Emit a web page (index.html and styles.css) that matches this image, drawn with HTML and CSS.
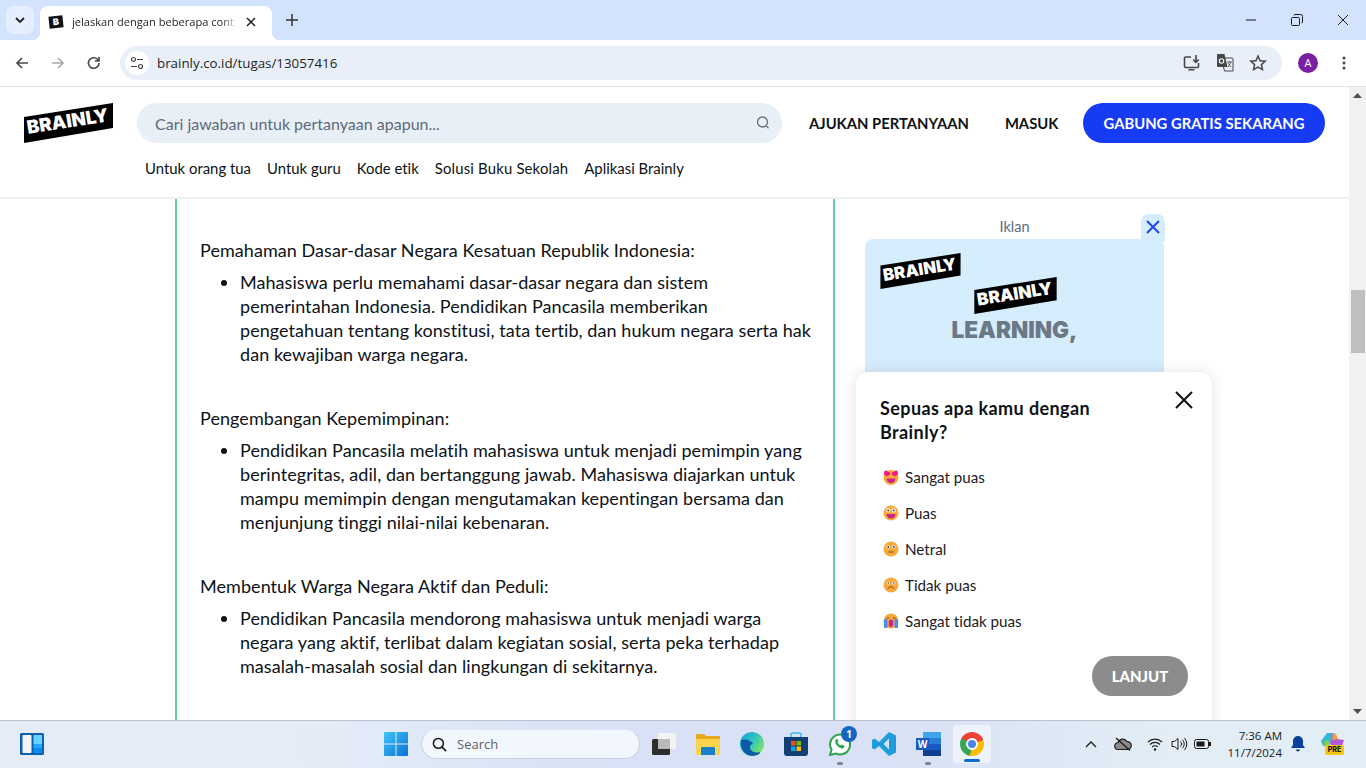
FILE: index.html
```html
<!DOCTYPE html>
<html lang="id">
<head>
<meta charset="utf-8">
<title>Brainly</title>
<link rel="stylesheet" href="styles.css">
</head>
<body>
<div class="tabstrip">
  <button class="tabsearch"><svg width="12" height="12" viewBox="0 0 12 12"><path d="M2 4l4 4 4-4" fill="none" stroke="#1f1f1f" stroke-width="1.8"/></svg></button>
  <div class="tab">
    <span class="favicon">B</span>
    <span class="tabtitle">jelaskan dengan beberapa cont</span>
    <svg class="tabclose" width="10" height="10" viewBox="0 0 10 10"><path d="M1 1l8 8M9 1l-8 8" stroke="#1f1f1f" stroke-width="1.5"/></svg>
  </div>
  <svg class="newtab" width="12" height="12" viewBox="0 0 12 12"><path d="M6 0v12M0 6h12" stroke="#333" stroke-width="1.5"/></svg>
  <div class="winctl">
    <svg width="12" height="12" viewBox="0 0 12 12"><path d="M1 6h10" stroke="#1a1a1a"/></svg>
    <svg width="12" height="12" viewBox="0 0 12 12"><path d="M1.5 3.5h6a1 1 0 0 1 1 1v6a1 1 0 0 1-1 1h-6a1 1 0 0 1-1-1v-6a1 1 0 0 1 1-1zM3 1.5a1 1 0 0 1 1-1h5.500a2 2 0 0 1 2 2V8a1 1 0 0 1-1 1" fill="none" stroke="#1a1a1a"/></svg>
    <svg width="12" height="12" viewBox="0 0 12 12"><path d="M1 1l10 10M11 1L1 11" stroke="#1a1a1a"/></svg>
  </div>
</div>

<div class="toolbar">
  <svg width="16" height="16" viewBox="0 0 16 16"><path d="M14 8H3M8 3L3 8l5 5" fill="none" stroke="#474747" stroke-width="1.600"/></svg>
  <svg width="16" height="16" viewBox="0 0 16 16"><path d="M2 8h11M8 3l5 5-5 5" fill="none" stroke="#a9a9a9" stroke-width="1.600"/></svg>
  <svg width="16" height="16" viewBox="0 0 16 16"><path d="M13 8a5.300 5.300 0 1 1-1.500-3.700L13 6M13 1.800V6H8.800" fill="none" stroke="#474747" stroke-width="1.600"/></svg>
  <div class="omnibox">
    <span class="siteinfo"><svg width="14" height="14" viewBox="0 0 14 14"><circle cx="3.500" cy="3.500" r="2" fill="none" stroke="#444" stroke-width="1.200"/><path d="M7 3.500h6M1 10.500h6" stroke="#444" stroke-width="1.200"/><circle cx="10.500" cy="10.500" r="2" fill="none" stroke="#444" stroke-width="1.200"/></svg></span>
    <span class="url">brainly.co.id/tugas/13057416</span>
    <span class="omni-actions">
      <svg width="18" height="18" viewBox="0 0 18 18"><path d="M8 3H2.500a1 1 0 0 0-1 1v8.500a1 1 0 0 0 1 1h12a1 1 0 0 0 1-1V9M5.500 15.800h6M13 1v7M10.200 5.500L13 8.300l2.800-2.800" fill="none" stroke="#474747" stroke-width="1.600"/></svg>
      <svg width="18" height="18" viewBox="0 0 18 18"><path d="M2 0h7l1.500 4H16a1 1 0 0 1 1 1v12H8l-1-4H2a1 1 0 0 1-1-1V1a1 1 0 0 1 1-1z" fill="#e9eff8"/><path d="M2 0h6.500l3 13H2a1 1 0 0 1-1-1V1a1 1 0 0 1 1-1z" fill="#474747"/><path d="M8.500 4H16a1 1 0 0 1 1 1v12H8.500L7.500 13" fill="none" stroke="#474747"/><circle cx="5.500" cy="7" r="2.200" fill="none" stroke="#fff" stroke-width="1.100"/><path d="M11 8h5M13.500 7v1M12 13l3-5M12 9l3 4" stroke="#474747" stroke-width=".8"/></svg>
      <svg width="18" height="18" viewBox="0 0 18 18"><path d="M9 2l2.100 4.700 5.100.5-3.800 3.400 1.100 5L9 13l-4.500 2.600 1.100-5L1.800 7.200l5.100-.5z" fill="none" stroke="#474747" stroke-width="1.500"/></svg>
    </span>
  </div>
  <span class="avatar">A</span>
  <svg class="kebab" width="4" height="14" viewBox="0 0 4 14"><circle cx="2" cy="2" r="1.500" fill="#474747"/><circle cx="2" cy="7" r="1.500" fill="#474747"/><circle cx="2" cy="12" r="1.500" fill="#474747"/></svg>
</div>

<div class="viewport">
  <div class="page">
    <header class="siteheader">
      <div class="headrow">
        <svg class="logo logo-main" viewBox="0 0 89 40"><polygon points="0,14 89,0 89,25 0,40"/><text x="4" y="31" transform="rotate(-9 4 31)" textLength="82" lengthAdjust="spacingAndGlyphs">BRAINLY</text></svg>
        <div class="search">
          <span>Cari jawaban untuk pertanyaan apapun...</span>
          <svg width="16" height="16" viewBox="0 0 16 16"><circle cx="7.500" cy="7" r="5" fill="none" stroke="#66707c" stroke-width="1.300"/><path d="M11 10.800l2.500 2.500" stroke="#66707c" stroke-width="1.300"/></svg>
        </div>
        <a class="headlink first">AJUKAN PERTANYAAN</a>
        <a class="headlink second">MASUK</a>
        <a class="joinbtn">GABUNG GRATIS SEKARANG</a>
      </div>
      <nav class="subnav">
        <a>Untuk orang tua</a><a>Untuk guru</a><a>Kode etik</a><a class="wide">Solusi Buku Sekolah</a><a>Aplikasi Brainly</a>
      </nav>
    </header>

    <div class="contentrow">
      <main class="answer">
        <p>Pemahaman Dasar-dasar Negara Kesatuan Republik Indonesia:</p>
        <ul><li>Mahasiswa perlu memahami dasar-dasar negara dan sistem pemerintahan Indonesia. Pendidikan Pancasila memberikan pengetahuan tentang konstitusi, tata tertib, dan hukum negara serta hak dan kewajiban warga negara.</li></ul>
        <p>Pengembangan Kepemimpinan:</p>
        <ul><li>Pendidikan Pancasila melatih mahasiswa untuk menjadi pemimpin yang berintegritas, adil, dan bertanggung jawab. Mahasiswa diajarkan untuk mampu memimpin dengan mengutamakan kepentingan bersama dan menjunjung tinggi nilai-nilai kebenaran.</li></ul>
        <p>Membentuk Warga Negara Aktif dan Peduli:</p>
        <ul><li>Pendidikan Pancasila mendorong mahasiswa untuk menjadi warga negara yang aktif, terlibat dalam kegiatan sosial, serta peka terhadap masalah-masalah sosial dan lingkungan di sekitarnya.</li></ul>
      </main>
      <aside class="adcol">
        <div class="adlabel">Iklan</div>
        <div class="adbox">
          <svg class="logo adlogo1" viewBox="0 0 89 40"><polygon points="0,14 89,0 89,25 0,40"/><text x="4" y="31" transform="rotate(-9 4 31)" textLength="82" lengthAdjust="spacingAndGlyphs">BRAINLY</text></svg>
          <svg class="logo adlogo2" viewBox="0 0 89 40"><polygon points="0,14 89,0 89,25 0,40"/><text x="4" y="31" transform="rotate(-9 4 31)" textLength="82" lengthAdjust="spacingAndGlyphs">BRAINLY</text></svg>
          <div class="adhead">LEARNING,</div>
          <button class="adclose"><svg width="14" height="14" viewBox="0 0 14 14"><path d="M1 1l12 12M13 1L1 13" stroke="#1f45ee" stroke-width="2"/></svg></button>
        </div>
      </aside>
    </div>

    <section class="survey">
      <svg class="surveyclose" width="18" height="18" viewBox="0 0 18 18"><path d="M1 1l16 16M17 1L1 17" stroke="#0d1216" stroke-width="2"/></svg>
      <h2>Sepuas apa kamu dengan Brainly?</h2>
      <ul class="options">
        <li><svg width="16" height="16" viewBox="0 0 16 16"><circle cx="8" cy="8.500" r="7.500" fill="#f9a83a"/><path d="M3.500 9.500h9a4.500 4.500 0 0 1-9 0z" fill="#c9258c"/><path d="M1 3.500a2 2 0 0 1 3.800-.8A2 2 0 0 1 7 5.500L4 7.500 1.300 5.500zM15 3.500a2 2 0 0 0-3.800-.8A2 2 0 0 0 9 5.500l3 2 2.700-2z" fill="#f2178b"/></svg><span>Sangat puas</span></li>
        <li><svg width="16" height="16" viewBox="0 0 16 16"><circle cx="8" cy="8" r="7.500" fill="#f9a83a"/><circle cx="5.200" cy="5.500" r="1.900" fill="#fff"/><circle cx="10.800" cy="5.500" r="1.900" fill="#fff"/><circle cx="5.200" cy="5.500" r=".9" fill="#333"/><circle cx="10.800" cy="5.500" r=".9" fill="#333"/><path d="M3.500 9h9a4.500 4.500 0 0 1-9 0z" fill="#c9258c"/></svg><span>Puas</span></li>
        <li><svg width="16" height="16" viewBox="0 0 16 16"><circle cx="8" cy="8" r="7.500" fill="#f9a83a"/><circle cx="5.200" cy="6" r="1.800" fill="#fff"/><circle cx="10.800" cy="6" r="1.800" fill="#fff"/><circle cx="5.200" cy="6" r=".9" fill="#333"/><circle cx="10.800" cy="6" r=".9" fill="#333"/><path d="M5.500 11h5" stroke="#7a4a20" stroke-width="1"/></svg><span>Netral</span></li>
        <li><svg width="16" height="16" viewBox="0 0 16 16"><circle cx="8" cy="8" r="7.500" fill="#f9a83a"/><circle cx="5.200" cy="6" r="1.600" fill="#fff"/><circle cx="10.800" cy="6" r="1.600" fill="#fff"/><circle cx="5.200" cy="6" r=".8" fill="#333"/><circle cx="10.800" cy="6" r=".8" fill="#333"/><path d="M5 11.800a3.200 3.200 0 0 1 6 0" fill="none" stroke="#7a4a20" stroke-width="1"/></svg><span>Tidak puas</span></li>
        <li><svg width="16" height="16" viewBox="0 0 16 16"><circle cx="8" cy="8" r="7.500" fill="#f9a83a"/><rect x="1" y="6" width="3.500" height="9" rx="1" fill="#4f8be8"/><rect x="11.500" y="6" width="3.500" height="9" rx="1" fill="#4f8be8"/><rect x="5.800" y="6.500" width="4.400" height="7.500" rx="2.200" fill="#c9258c"/><path d="M3.500 5h2.500M10 5h2.500" stroke="#7a4a20"/></svg><span>Sangat tidak puas</span></li>
      </ul>
      <div class="surveyfoot"><button class="nextbtn">LANJUT</button></div>
    </section>
  </div>

  <div class="scrollbar">
    <svg width="9" height="5" viewBox="0 0 9 5"><path d="M4.500 0L9 5H0z" fill="#505050"/></svg>
    <div class="thumbtrack"><div class="thumb"></div></div>
    <svg width="9" height="5" viewBox="0 0 9 5"><path d="M0 0h9L4.500 5z" fill="#505050"/></svg>
  </div>
</div>

<footer class="taskbar">
  <svg class="widgets" width="25" height="22" viewBox="0 0 25 22"><rect width="24" height="22" rx="1.500" fill="#0f5fb0"/><rect x="2.500" y="2" width="9" height="18" rx="1" fill="#f4f4f4"/><rect x="13.500" y="2" width="8.500" height="9" fill="#67d2ff"/><rect x="13.500" y="11" width="8.500" height="4" fill="#22a8ff"/><rect x="13.500" y="15" width="8.500" height="5" fill="#0d8cf0"/></svg>

  <div class="centergroup">
    <svg width="24" height="24" viewBox="0 0 24 24"><defs><linearGradient id="win" x1="0" y1="0" x2="1" y2="1"><stop offset="0" stop-color="#3fc6f8"/><stop offset="1" stop-color="#0a70d6"/></linearGradient></defs><path d="M0 1a1 1 0 0 1 1-1h10.500v11.500H0zM12.500 0H23a1 1 0 0 1 1 1v10.500H12.500zM0 12.500h11.500V24H1a1 1 0 0 1-1-1zM12.500 12.500H24V23a1 1 0 0 1-1 1H12.500z" fill="url(#win)"/></svg>
    <div class="tsearch">
      <svg width="15" height="15" viewBox="0 0 16 16"><circle cx="6.800" cy="6.800" r="5.300" fill="none" stroke="#1a1a1a" stroke-width="1.600"/><path d="M10.500 10.500L15 15" stroke="#1a1a1a" stroke-width="1.800"/></svg>
      <span>Search</span>
    </div>
    <svg class="taskview" width="24" height="22" viewBox="0 0 24 22"><rect x="6" width="18" height="16" rx="1.500" fill="#f3f3f3"/><rect y="6" width="18" height="16" rx="1.500" fill="#2d2d2d"/><rect x="6" y="6" width="12" height="10" fill="#b9b9b9"/></svg>
    <svg width="24" height="22" viewBox="0 0 24 22"><path d="M0 2a1 1 0 0 1 1-1h7l2 2h13a1 1 0 0 1 1 1v4H0z" fill="#e6a81c"/><path d="M0 6h24v15a1 1 0 0 1-1 1H1a1 1 0 0 1-1-1z" fill="#fcd34f"/><rect x="5" y="14" width="14" height="8" rx="1" fill="#1a7fc9"/></svg>
    <svg width="24" height="24" viewBox="0 0 24 24"><defs><linearGradient id="edge" x1="0" y1="0" x2="1" y2=".6"><stop offset="0" stop-color="#1a9fd6"/><stop offset=".55" stop-color="#2cc3c0"/><stop offset="1" stop-color="#7fe06a"/></linearGradient></defs><circle cx="12" cy="12" r="12" fill="url(#edge)"/><path d="M1 8C.5 13 1.500 19 7 22.500c3 1.500 8 2 12-.5 1-.7 1.500-2 0-1.700-4 .7-8-.5-9-4-.5-2 .5-4 3-4.500-2-3.500-8-5.500-12-3.800z" fill="#0c59a4"/></svg>
    <svg width="24" height="24" viewBox="0 0 24 24"><path d="M7 6V3a2 2 0 0 1 2-2h6a2 2 0 0 1 2 2v3" fill="none" stroke="#36bde8" stroke-width="1.500"/><path d="M0 5h24v16a3 3 0 0 1-3 3H3a3 3 0 0 1-3-3z" fill="#123f74"/><rect x="7" y="9" width="4.500" height="4.500" fill="#f25022"/><rect x="12.500" y="9" width="4.500" height="4.500" fill="#7fba00"/><rect x="7" y="14.500" width="4.500" height="4.500" fill="#00a4ef"/><rect x="12.500" y="14.500" width="4.500" height="4.500" fill="#ffb900"/></svg>
    <div class="wa">
      <svg width="24" height="24" viewBox="0 0 24 24"><path d="M12 2.500a10 10 0 0 0-8.500 15L2 23l5.700-1.500A10 10 0 1 0 12 2.500z" fill="#fff" stroke="#2aa54b" stroke-width="2"/><path d="M8 7.500c-1.500 1.500-1 4 1.500 6.500s5 3.200 6.500 1.500l.5-1.500-2.500-1.500-1 1c-1.500-.5-3-2-3.500-3.500l1-1L9.500 7z" fill="#2aa54b"/></svg>
      <span class="wabadge">1</span>
      <span class="pip"></span>
    </div>
    <svg width="24" height="24" viewBox="0 0 24 24"><path d="M17 0l7 3.500v17L17 24 7 14l-4.500 3.500L0 16V8l2.500-1.500L7 10zM17 6.500L11.500 12l5.500 5.500z" fill="#1f9cdc"/></svg>
    <div class="word">
      <svg width="25" height="24" viewBox="0 0 25 24"><rect x="7" width="18" height="6" fill="#41a5ee"/><rect x="7" y="6" width="18" height="6" fill="#2b7cd3"/><rect x="7" y="12" width="18" height="6" fill="#185abd"/><rect x="7" y="18" width="18" height="6" fill="#103f91"/><rect y="6" width="13" height="12" fill="#185abd"/><text x="6.500" y="16" class="wordw">W</text></svg>
      <span class="pip"></span>
    </div>
    <div class="activeapp">
      <span class="chromeicon"><span></span></span>
      <span class="activebar"></span>
    </div>
  </div>

  <div class="tray">
    <svg width="12" height="8" viewBox="0 0 12 8"><path d="M1 7l5-5 5 5" fill="none" stroke="#1a1a1a" stroke-width="1.300"/></svg>
    <svg class="tcloud" width="18" height="14" viewBox="0 0 18 14"><path d="M4.500 12.500a3.500 3.500 0 0 1-.5-7A5 5 0 0 1 13 4.500a4 4 0 0 1 .5 8z" fill="#8a8a8a" stroke="#1a1a1a" stroke-width="1.200"/><path d="M2 1l14 12.500" stroke="#1a1a1a" stroke-width="1.300"/></svg>
    <svg class="twifi" width="16" height="14" viewBox="0 0 16 14"><path d="M1 5a10 10 0 0 1 14 0M3 7.500a7 7 0 0 1 10 0M5.200 10a4 4 0 0 1 5.600 0" fill="none" stroke="#1a1a1a" stroke-width="1.100"/><circle cx="8" cy="12.500" r="1.200" fill="#1a1a1a"/></svg>
    <svg class="tvol" width="17" height="14" viewBox="0 0 17 14"><path d="M1 4.500h2.500L7 1.500v11l-3.500-3H1zM9.500 4.500a3.500 3.500 0 0 1 0 5M11.500 2.800a6 6 0 0 1 0 8.400M13.500 1a9 9 0 0 1 0 12" fill="none" stroke="#1a1a1a"/></svg>
    <svg class="tbat" width="17" height="10" viewBox="0 0 17 10"><rect x=".5" y=".5" width="14" height="9" rx="2" fill="none" stroke="#1a1a1a"/><rect x="2.500" y="2.500" width="8" height="5" fill="#1a1a1a"/><rect x="15" y="3" width="2" height="4" fill="#1a1a1a"/></svg>
    <div class="clock"><span>7:36 AM</span><span>11/7/2024</span></div>
    <svg class="tbell" width="14" height="16" viewBox="0 0 14 16"><path d="M7 0a5 5 0 0 1 5 5v4l2 3H0l2-3V5a5 5 0 0 1 5-5zM5 13.500h4a2 2 0 0 1-4 0z" fill="#0b3f9e"/></svg>
    <div class="copilot">
      <svg width="24" height="20" viewBox="0 0 24 20"><path d="M7 1h7l3 6 7 1-3 9h-8l-3-6-8-1z" fill="#b45ad6"/><path d="M7 1h6L9 14H3L1 9z" fill="#35b8d8"/><path d="M3 14l2-6 5 1-3 6z" fill="#7bd04b"/><path d="M13 1c3 0 4 3 5 6l-6 1z" fill="#f2a03f"/></svg>
      <span class="pre">PRE</span>
    </div>
  </div>
</footer>
</body>
</html>
```
FILE: styles.css
```css
* { box-sizing: border-box; }
html, body { margin: 0; padding: 0; height: 100%; overflow: hidden; }
body { display: flex; flex-direction: column; width: 1366px; height: 768px; font-family: "Lato", "Liberation Sans", sans-serif; font-variant-ligatures: none; color: #0d1216; background: #fff; }
button { border: 0; padding: 0; font: inherit; }
p, ul, h2 { margin: 0; }

/* Browser frame */
.tabstrip { flex: 0 0 40px; background: #d3e3fd; display: flex; align-items: flex-end; padding-left: 6px; position: relative; font-family: "Open Sans", sans-serif; }
.tabsearch { width: 28px; height: 28px; border-radius: 8px; background: #e5eefd; margin-bottom: 6px; display: flex; align-items: center; justify-content: center; }
.tab { width: 232px; height: 34px; margin-left: 6px; background: #fff; border-radius: 8px 8px 0 0; display: flex; align-items: center; padding: 0 16px 2px 9px; position: relative; }
.tab::before, .tab::after { content: ""; position: absolute; bottom: 0; width: 8px; height: 8px; }
.tab::before { left: -8px; background: radial-gradient(circle at 0 0, transparent 8px, #fff 8.500px); }
.tab::after { right: -8px; background: radial-gradient(circle at 100% 0, transparent 8px, #fff 8.500px); }
.favicon { width: 14px; height: 12px; background: #0d1216; color: #fff; font: 900 9px/12px "Inter", sans-serif; text-align: center; transform: rotate(-6deg); flex: none; }
.tabtitle { margin-left: 9px; width: 166px; font-size: 11.100px; line-height: 16px; white-space: nowrap; color: #1f1f1f; -webkit-mask-image: linear-gradient(90deg, #000 90%, transparent); mask-image: linear-gradient(90deg, #000 90%, transparent); }
.tabclose { margin-left: 8px; flex: none; }
.newtab { margin: 0 0 14px 14px; }
.winctl { margin-left: auto; display: flex; gap: 34px; padding-right: 17px; margin-bottom: 14px; }

.toolbar { flex: 0 0 47px; background: #fff; border-bottom: 1px solid #e1e3e6; border-radius: 8px 8px 0 0; display: flex; align-items: center; padding: 0 0 1px 14px; gap: 20px; position: relative; z-index: 1; }
.omnibox { width: 1162px; height: 34px; margin-left: -2px; border-radius: 17px; background: #e9eff8; display: flex; align-items: center; padding: 0 15px 0 5px; font-family: "Open Sans", sans-serif; }
.siteinfo { width: 24px; height: 24px; border-radius: 50%; background: #fff; display: flex; align-items: center; justify-content: center; flex: none; }
.url { margin-left: 8px; font-size: 13.350px; color: #1f1f1f; }
.omni-actions { margin-left: auto; display: flex; gap: 15px; align-items: center; }
.avatar { width: 20px; height: 20px; border-radius: 50%; background: #7b1fa2; color: #fff; font: 11px/20px "Open Sans", sans-serif; text-align: center; margin-left: -4px; flex: none; }
.kebab { margin-left: 4px; }

/* Page */
.viewport { flex: 0 0 633px; display: flex; overflow: hidden; position: relative; }
.page { width: 1349px; height: 633px; position: relative; overflow: hidden; }
.scrollbar { width: 17px; background: #f1f1f1; display: flex; flex-direction: column; align-items: center; padding: 6px 0; }
.thumbtrack { flex: 1; width: 100%; padding-top: 192px; }
.thumb { height: 63px; background: #bfbfbf; width: 14px; margin-left: 2px; }

.siteheader { height: 112px; background: #fff; border-bottom: 2px solid #eef0f3; padding: 16px 24px 0; }
.headrow { display: flex; align-items: center; height: 40px; }
.logo polygon { fill: #000; }
.logo text { fill: #fff; font: 900 18.500px "Inter", "Liberation Sans", sans-serif; }
.logo-main { width: 89px; height: 40px; flex: none; }
.search { width: 645px; height: 40px; margin-left: 24px; border-radius: 20px; background: #e9eff6; display: flex; align-items: center; justify-content: space-between; padding: 0 11px 0 18px; font-size: 16px; color: #5c6b7a; flex: none; }
.headlink { font-size: 14.800px; font-weight: 700; color: #0d1216; white-space: nowrap; }
.headlink.first { margin-left: 27px; }
.headlink.second { margin-left: 36px; }
.joinbtn { margin-left: auto; width: 242px; height: 40px; border-radius: 20px; background: #163bf3; color: #fff; font-size: 14.800px; font-weight: 700; display: flex; align-items: center; justify-content: center; white-space: nowrap; }
.subnav { display: flex; gap: 16px; padding: 15px 0 0 121px; font-size: 14.900px; line-height: 20px; }
.subnav .wide { letter-spacing: .17px; }

.contentrow { display: flex; height: 521px; }
.answer { margin-left: 175px; width: 660px; border-left: 2px solid #60cf9c; border-right: 2px solid #60cf9c; padding: 39px 18px 0 23px; font-size: 18px; line-height: 24px; letter-spacing: .06px; overflow: hidden; }
.answer ul { padding-left: 40px; margin: 8px 0 40px; }
.adcol { margin-left: 30px; width: 299px; }
.adlabel { height: 40px; padding-top: 19px; text-align: center; font-size: 14.500px; line-height: 18px; color: #5c6b7a; }
.adbox { height: 420px; background: #d6edfd; border-radius: 8px 8px 0 0; position: relative; text-align: center; }
.adlogo1 { position: absolute; left: 15px; top: 14px; width: 81px; height: 36px; }
.adlogo2 { position: absolute; left: 107px; top: 38px; width: 87px; height: 37px; }
.adhead { position: absolute; left: 0; right: 0; top: 76px; font-family: "Inter", sans-serif; font-size: 22.500px; line-height: 30px; font-weight: 900; color: #6b7885; }
.adclose { position: absolute; right: -1px; top: -25px; width: 24px; height: 28px; background: #d6edfd; border-radius: 8px 8px 0 0; display: flex; align-items: center; justify-content: center; padding-bottom: 3px; }

.survey { position: absolute; left: 856px; top: 285px; width: 356px; height: 400px; background: #fff; border-radius: 12px; box-shadow: 0 0 14px rgba(0, 0, 0, .12); padding: 24px; }
.survey h2 { font-size: 18px; line-height: 24px; font-weight: 700; width: 240px; letter-spacing: .4px; }
.surveyclose { position: absolute; right: 19px; top: 19px; }
.options { list-style: none; padding: 15px 0 0 3px; }
.options li { height: 36px; display: flex; align-items: center; gap: 6px; font-size: 15.200px; color: #1b2025; }
.surveyfoot { display: flex; justify-content: flex-end; margin-top: 17px; }
.nextbtn { width: 96px; height: 40px; border-radius: 20px; background: #8c8c8c; color: #fff; font-family: "Lato", sans-serif; font-size: 15px; font-weight: 900; }

/* Taskbar */
.taskbar { flex: 0 0 48px; background: linear-gradient(90deg, #e4edf7 0%, #e4edf7 22%, #d8e1f5 45%, #d8e1f5 65%, #e3edf6 85%); border-top: 1px solid #bcc2cc; display: flex; align-items: center; padding: 0 0 1px 20px; font-family: "Open Sans", sans-serif; }
.widgets { flex: none; }
.centergroup { display: flex; align-items: center; gap: 20px; margin-left: 339px; }
.centergroup > svg { flex: none; }
.tsearch { width: 219px; height: 30px; border-radius: 15px; background: #f2f6fd; border: 1px solid #c9d0de; border-top-color: #e0e6f2; margin: 0 -8px 0 -7px; display: flex; align-items: center; gap: 10px; padding-left: 10px; font-size: 13px; color: #5f6368; }
.wa { position: relative; width: 24px; height: 24px; }
.word { position: relative; width: 25px; height: 24px; }
.wabadge { position: absolute; left: 13px; top: -6px; width: 16px; height: 16px; border-radius: 50%; background: #1565c0; color: #fff; font-size: 10px; font-weight: 700; line-height: 16px; text-align: center; }
.pip { position: absolute; left: 9px; bottom: -9px; width: 6px; height: 3px; border-radius: 2px; background: #7d8088; }
.wordw { fill: #fff; font: 700 10px "Open Sans", sans-serif; text-anchor: middle; }
.activeapp { position: relative; width: 38px; height: 38px; margin-left: -8px; border-radius: 4px; background: #eef2fb; display: flex; align-items: center; justify-content: center; }
.chromeicon { width: 24px; height: 24px; border-radius: 50%; background: conic-gradient(#ea4335 0 70deg, #fbbc04 70deg 190deg, #34a853 190deg 300deg, #ea4335 300deg); display: flex; align-items: center; justify-content: center; }
.chromeicon span { width: 12px; height: 12px; border-radius: 50%; background: #4a86e8; border: 2px solid #fff; }
.activebar { position: absolute; left: 11px; bottom: 1px; width: 16px; height: 3px; border-radius: 2px; background: #0a6cce; }
.tray { display: flex; align-items: center; margin-left: 94px; }
.tcloud { margin-left: 17px; }
.twifi { margin-left: 15px; }
.tvol { margin-left: 8px; }
.tbat { margin-left: 6px; }
.clock { width: 63px; margin-left: 8px; display: flex; flex-direction: column; align-items: flex-end; font-size: 11.500px; line-height: 17px; color: #1a1a1a; }
.tbell { margin-left: 9px; }
.copilot { position: relative; width: 24px; height: 24px; margin-left: 15px; }
.pre { position: absolute; left: 5px; top: 13px; width: 19px; height: 10px; border-radius: 2px; background: #f5c518; color: #111; font: 800 7px/10px "Inter", sans-serif; text-align: center; }
```
